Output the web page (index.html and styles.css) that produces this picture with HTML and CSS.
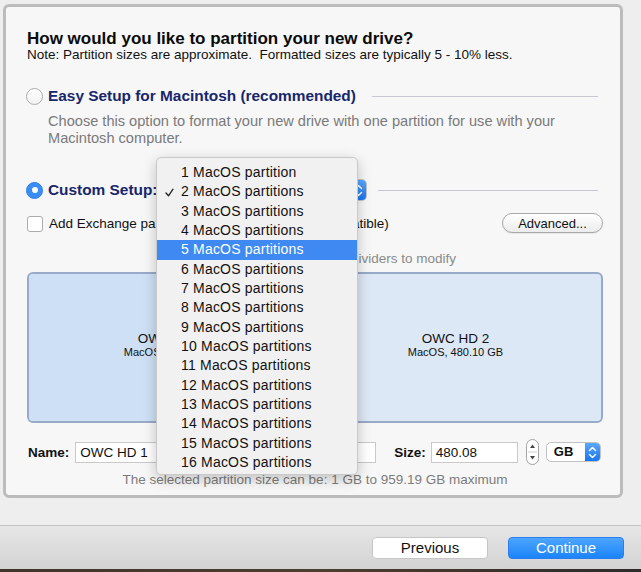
FILE: index.html
```html
<!DOCTYPE html>
<html>
<head>
<meta charset="utf-8">
<title>Partition drive</title>
<link rel="stylesheet" href="styles.css">
</head>
<body>
<div class="screen">
  <section class="panel">
    <h1 class="title">How would you like to partition your new drive?</h1>
    <p class="note">Note: Partition sizes are approximate.&nbsp; Formatted sizes are typically 5 - 10% less.</p>

    <div class="option-row easy">
      <span class="radio"></span>
      <span class="option-label">Easy Setup for Macintosh (recommended)</span>
      <span class="rule"></span>
    </div>
    <p class="desc">Choose this option to format your new drive with one partition for use with your<br>Macintosh computer.</p>

    <div class="option-row custom">
      <span class="radio on"></span>
      <span class="option-label">Custom Setup:</span>
      <span class="popup wide">
        <span class="popup-text">2 MacOS partitions</span>
        <span class="popup-arrows"><svg width="9" height="13" viewBox="0 0 9 13"><path d="M1.5 4.5 L4.5 1.5 L7.5 4.5 M1.5 8.5 L4.5 11.5 L7.5 8.5" fill="none" stroke="#fff" stroke-width="1.5" stroke-linecap="round" stroke-linejoin="round"/></svg></span>
      </span>
      <span class="rule"></span>
    </div>

    <div class="check-row">
      <span class="checkbox"></span>
      <span class="check-label">Add Exchange partition (exFAT, Mac and PC compatible)</span>
      <button class="pill">Advanced...</button>
    </div>

    <p class="hint">Select a partition, or drag the dividers to modify</p>

    <div class="map">
      <div class="part sel" style="flex-basis: 281px">
        <span class="part-name">OWC HD 1</span>
        <span class="part-info">MacOS, 480.08 GB</span>
      </div>
      <div class="part">
        <span class="part-name">OWC HD 2</span>
        <span class="part-info">MacOS, 480.10 GB</span>
      </div>
    </div>

    <div class="fields">
      <span class="field-label">Name:</span>
      <span class="input name-input">OWC HD 1</span>
      <span class="field-label size-label">Size:</span>
      <span class="input size-input">480.08</span>
      <span class="stepper"><svg width="13" height="26" viewBox="0 0 13 26"><path d="M4 9 L6.5 5.5 L9 9 Z" fill="#444"/><path d="M4 17 L6.5 20.5 L9 17 Z" fill="#444"/><path d="M2 13 H11" stroke="#d0d0d0" stroke-width="1"/></svg></span>
      <span class="popup unit">
        <span class="popup-text unit-text">GB</span>
        <span class="popup-arrows"><svg width="9" height="13" viewBox="0 0 9 13"><path d="M1.5 4.5 L4.5 1.5 L7.5 4.5 M1.5 8.5 L4.5 11.5 L7.5 8.5" fill="none" stroke="#fff" stroke-width="1.5" stroke-linecap="round" stroke-linejoin="round"/></svg></span>
      </span>
    </div>

    <p class="range">The selected partition size can be: 1 GB to 959.19 GB maximum</p>
  </section>

  <footer class="bar">
    <button class="btn">Previous</button>
    <button class="btn primary">Continue</button>
  </footer>
  <div class="desktop"></div>

  <div class="menu">
    <div class="item">1 MacOS partition</div>
    <div class="item checked"><svg class="tick" width="9" height="9" viewBox="0 0 9 9"><path d="M1 5 L3.5 7.8 L8 1.2" fill="none" stroke="#222" stroke-width="1.3" stroke-linecap="round" stroke-linejoin="round"/></svg>2 MacOS partitions</div>
    <div class="item">3 MacOS partitions</div>
    <div class="item">4 MacOS partitions</div>
    <div class="item active">5 MacOS partitions</div>
    <div class="item">6 MacOS partitions</div>
    <div class="item">7 MacOS partitions</div>
    <div class="item">8 MacOS partitions</div>
    <div class="item">9 MacOS partitions</div>
    <div class="item">10 MacOS partitions</div>
    <div class="item">11 MacOS partitions</div>
    <div class="item">12 MacOS partitions</div>
    <div class="item">13 MacOS partitions</div>
    <div class="item">14 MacOS partitions</div>
    <div class="item">15 MacOS partitions</div>
    <div class="item">16 MacOS partitions</div>
  </div>
</div>
</body>
</html>
```

FILE: styles.css
```css
* { box-sizing: border-box; }
html, body { margin: 0; padding: 0; }
body {
  background: #ededed;
  font-family: "Liberation Sans", Arial, "DejaVu Sans", sans-serif;
  color: #111;
}
.screen {
  position: relative;
  width: 641px;
  height: 572px;
  display: flex;
  flex-direction: column;
  overflow: hidden;
  background: #eeeeee;
}
.panel {
  flex: none;
  margin: 4px 18px 0 3px;
  height: 494px;
  border: 3px solid #bcbcbc;
  border-radius: 6px;
  background: #f7f7f7;
  padding: 23px 17px 0 21px;
  display: flex;
  flex-direction: column;
}
.title {
  margin: 0;
  font-size: 17px;
  line-height: 18px;
  font-weight: bold;
  color: #0b0b0b;
}
.note {
  margin: -0.5px 0 0;
  font-size: 13.5px;
  line-height: 14px;
  color: #111;
}
.option-row {
  display: flex;
  align-items: center;
}
.easy { margin-top: 24.5px; height: 20px; }
.radio {
  flex: none;
  width: 17px;
  height: 17px;
  margin-left: -1px;
  border-radius: 50%;
  border: 1px solid #acacac;
  background: linear-gradient(#ffffff, #f1f1f1);
}
.radio.on {
  background: #3b8df6;
  border-color: #2f80ea;
  display: flex;
  align-items: center;
  justify-content: center;
}
.radio.on::after {
  content: "";
  width: 6px;
  height: 6px;
  border-radius: 50%;
  background: #fff;
}
.option-label {
  margin-left: 5px;
  font-size: 15.4px;
  line-height: 20px;
  font-weight: bold;
  color: #18266b;
  white-space: nowrap;
}
.rule {
  flex: 1;
  height: 1px;
  background: #c8c8d2;
  margin-right: 5px;
}
.easy .rule { margin-left: 16px; }
.desc {
  margin: 6.6px 0 0 21px;
  font-size: 14.6px;
  line-height: 17.5px;
  color: #7a7a7a;
}
.custom { margin-top: 31.5px; height: 22px; }
.custom .rule { margin-left: 11px; }
.popup {
  flex: none;
  display: flex;
  align-items: stretch;
  height: 22px;
  border: 1px solid #c2c2c2;
  border-radius: 5px;
  background: #fff;
  overflow: hidden;
}
.popup-text {
  flex: 1;
  padding-left: 8px;
  font-size: 13px;
  line-height: 20px;
  color: #111;
  white-space: nowrap;
}
.popup-arrows {
  flex: none;
  width: 15px;
  display: flex;
  align-items: center;
  justify-content: center;
  background: linear-gradient(#5ba8fc, #1976ee);
}
.wide { margin-left: 4px; width: 206px; }

.check-row {
  margin-top: 11px;
  height: 22px;
  display: flex;
  align-items: center;
}
.checkbox {
  flex: none;
  width: 16px;
  height: 16px;
  border: 1px solid #adadad;
  border-radius: 3px;
  background: #fff;
  margin-top: 2px;
}
.check-label {
  margin-left: 6px;
  font-size: 13.5px;
  line-height: 16px;
  color: #111;
  white-space: nowrap;
  margin-top: 2px;
}
.pill {
  margin-left: auto;
  width: 101px;
  height: 20px;
  padding: 0;
  border: 1px solid #a9a9a9;
  border-radius: 10px;
  background: linear-gradient(#ffffff, #ececec);
  font-family: inherit;
  font-size: 13px;
  color: #111;
  box-shadow: 0 0.5px 1px rgba(0,0,0,0.12);
}
.hint {
  margin: 17px 0 0;
  font-size: 13.5px;
  line-height: 15px;
  text-align: center;
  color: #8a8a8a;
}
.map {
  margin-top: 6px;
  height: 151px;
  border: 2px solid #98aac8;
  border-radius: 6px;
  display: flex;
  overflow: hidden;
  background: #dde8f6;
}
.part {
  flex: 1 1 0;
  display: flex;
  flex-direction: column;
  align-items: center;
  justify-content: center;
  padding-bottom: 5px;
  color: #111;
}
.part.sel {
  flex-grow: 0;
  flex-shrink: 0;
  background: #cde0f5;
  border-right: 2px solid #98aac8;
  padding-left: 6px;
}
.part-name { font-size: 13.5px; line-height: 15px; }
.part-info { font-size: 11px; line-height: 13px; }

.fields {
  margin-top: 16px;
  height: 26px;
  display: flex;
  align-items: center;
}
.field-label {
  margin-left: 1px;
  font-size: 13.5px;
  font-weight: bold;
  color: #111;
}
.input {
  height: 21px;
  margin-left: 6px;
  border: 1px solid #c9c9c9;
  background: #fff;
  font-size: 13.5px;
  line-height: 19px;
  padding-left: 4px;
  color: #111;
}
.name-input { width: 301px; }
.size-label { margin-left: 18px; }
.size-input { width: 87px; margin-left: 5px; }
.stepper {
  margin-left: 8px;
  width: 13px;
  height: 26px;
  border: 1px solid #a3a3a3;
  border-radius: 7px;
  background: #fff;
  overflow: hidden;
  display: flex;
  align-items: center;
  justify-content: center;
}
.stepper svg { flex: none; }
.unit {
  margin-left: 7px;
  width: 55px;
  height: 20px;
}
.unit-text {
  font-weight: bold;
  line-height: 18px;
  padding-left: 7px;
}
.range {
  margin: 7px 0 0;
  font-size: 13.5px;
  line-height: 15px;
  text-align: center;
  color: #7c7c7c;
}

.bar {
  flex: none;
  margin-top: 27px;
  height: 44px;
  border-top: 1px solid #c4c4c4;
  background: linear-gradient(#e6e6e6, #d3d3d3);
  display: flex;
  align-items: center;
  justify-content: flex-end;
  gap: 20px;
  padding-right: 17px;
}
.btn {
  width: 116px;
  height: 22px;
  padding: 0;
  border: 1px solid #c6c6c6;
  border-radius: 4px;
  background: #fff;
  font-family: inherit;
  font-size: 15px;
  color: #111;
}
.btn.primary {
  border-color: #2a7ff0;
  background: linear-gradient(#4ea6fd, #1b84fb);
  color: #fff;
}
.desktop {
  flex: 1;
  background: linear-gradient(90deg, #3d352c, #4b3e2f 50%, #2e2b2a);
}

.menu {
  position: absolute;
  left: 156px;
  top: 157px;
  width: 202px;
  height: 318px;
  padding: 5px 0 4px;
  border: 1px solid #c9c9c9;
  border-radius: 5px;
  background: #f1f1f1;
  box-shadow: 0 4px 14px rgba(0,0,0,0.22);
}
.item {
  position: relative;
  height: 19.33px;
  line-height: 19.33px;
  padding-left: 24px;
  font-size: 14px;
  letter-spacing: 0.2px;
  color: #111;
  white-space: nowrap;
}
.item.active {
  background: #3f89f3;
  color: #fff;
}
.tick {
  position: absolute;
  left: 8px;
  top: 6px;
}
```
